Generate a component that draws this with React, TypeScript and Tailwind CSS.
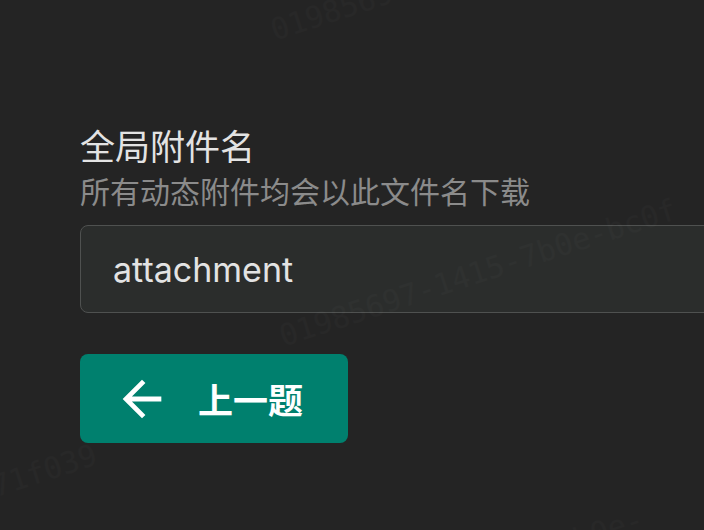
import { useState } from "react"

const cjk = "font-['Noto_Sans_CJK_SC','Noto_Sans',sans-serif]"

function ArrowBack() {
  return (
    <svg viewBox="0 0 24 24" className="h-[58px] w-[58px] fill-white">
      <path d="M20 11H7.83l5.59-5.59L12 4l-8 8 8 8 1.41-1.41L7.83 13H20v-2z" />
    </svg>
  )
}

const marks = [
  { text: "01985697", cls: "left-[268px] top-[-14px]" },
  { text: "01985697-1415-7b0e-bc0f", cls: "left-[270px] top-[250px]" },
  { text: "71f039", cls: "left-[-10px] top-[448px]" },
  { text: "7b0e-bc0f", cls: "left-[560px] top-[500px]" },
]

export default function App() {
  const [name, setName] = useState("attachment")

  return (
    <div className={`relative h-[530px] w-full overflow-hidden bg-[#242424] ${cjk}`}>
      <div className="pl-[80px] pt-[120px]">
        <h2 className="text-[35px] leading-[50px] text-[#e3e3e3]">全局附件名</h2>
        <p className="text-[30px] leading-[40px] text-[#8b8b8b]">所有动态附件均会以此文件名下载</p>

        <input
          value={name}
          onChange={(e) => setName(e.target.value)}
          className="mt-[15px] block h-[88px] w-[700px] rounded-lg border border-[#4f5150] bg-[#2b2d2c] px-[32px] font-['Inter',sans-serif] text-[34px] text-[#e3e3e3] outline-none"
        />

        <button className="mt-[41px] flex h-[89px] w-[268px] items-center rounded-lg bg-[#00806e] pl-[33px] text-white">
          <ArrowBack />
          <span className="ml-[27px] text-[35px] leading-none font-bold">上一题</span>
        </button>
      </div>

      {marks.map((m) => (
        <span
          key={m.text}
          className={`pointer-events-none absolute -rotate-[18deg] font-['DejaVu_Sans_Mono',monospace] text-[30px] text-white/[0.018] ${m.cls}`}
        >
          {m.text}
        </span>
      ))}
    </div>
  )
}
